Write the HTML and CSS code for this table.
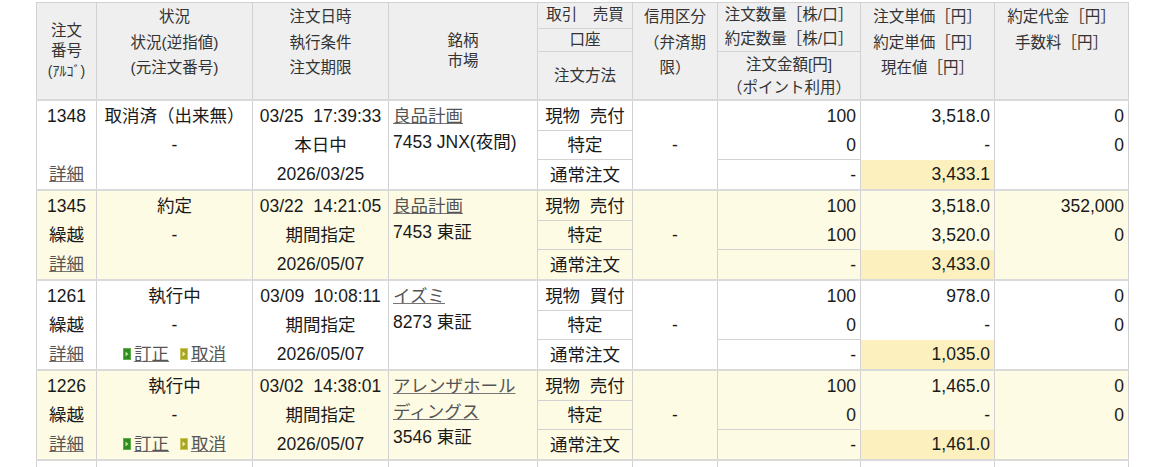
FILE: index.html
```html
<!DOCTYPE html>
<html lang="ja">
<head>
<meta charset="utf-8">
<title>注文一覧</title>
<link rel="stylesheet" href="styles.css">
</head>
<body>
<div class="wrap">
<table class="orders">
  <colgroup>
    <col class="w1"><col class="w2"><col class="w3"><col class="w4"><col class="w5">
    <col class="w6"><col class="w7"><col class="w8"><col class="w9">
  </colgroup>
  <thead>
    <tr class="h1">
      <th rowspan="3" class="hc hmid">注文<br>番号<br><span class="algo">(ｱﾙｺﾞ)</span></th>
      <th rowspan="3" class="htop">状況<br>状況(逆指値)<br>(元注文番号)</th>
      <th rowspan="3" class="htop">注文日時<br>執行条件<br>注文期限</th>
      <th rowspan="3" class="hc hmid">銘柄<br>市場</th>
      <th class="hsub">取引　売買</th>
      <th rowspan="3" class="htop">信用区分<br>（弁済期<br>限）</th>
      <th rowspan="2" class="hqty">注文数量［株/口］<br>約定数量［株/口］</th>
      <th rowspan="3" class="htop">注文単価［円］<br>約定単価［円］<br>現在値［円］</th>
      <th rowspan="3" class="htop">約定代金［円］<br>手数料［円］</th>
    </tr>
    <tr class="h2">
      <th class="hsub">口座</th>
    </tr>
    <tr class="h3">
      <th class="hsub">注文方法</th>
      <th class="hamt">注文金額[円]<br>（ポイント利用）</th>
    </tr>
  </thead>
  <tbody>
    <!-- 1348 -->
    <tr class="s1">
      <td class="c">1348</td>
      <td class="c">取消済（出来無）</td>
      <td class="c">03/25&nbsp;&nbsp;17:39:33</td>
      <td rowspan="3" class="name"><a href="#">良品計画</a><br>7453 JNX(夜間)</td>
      <td class="k">現物&nbsp;&nbsp;売付</td>
      <td rowspan="3" class="c">-</td>
      <td class="r">100</td>
      <td class="r">3,518.0</td>
      <td class="r">0</td>
    </tr>
    <tr class="s2">
      <td class="c"></td>
      <td class="c">-</td>
      <td class="c">本日中</td>
      <td class="k">特定</td>
      <td class="r">0</td>
      <td class="r">-</td>
      <td class="r">0</td>
    </tr>
    <tr class="s3">
      <td class="c"><a href="#">詳細</a></td>
      <td class="c"></td>
      <td class="c">2026/03/25</td>
      <td class="k">通常注文</td>
      <td class="r amt">-</td>
      <td class="r hl">3,433.1</td>
      <td class="r"></td>
    </tr>

    <!-- 1345 -->
    <tr class="s1 y">
      <td class="c">1345</td>
      <td class="c">約定</td>
      <td class="c">03/22&nbsp;&nbsp;14:21:05</td>
      <td rowspan="3" class="name"><a href="#">良品計画</a><br>7453 東証</td>
      <td class="k">現物&nbsp;&nbsp;売付</td>
      <td rowspan="3" class="c">-</td>
      <td class="r">100</td>
      <td class="r">3,518.0</td>
      <td class="r">352,000</td>
    </tr>
    <tr class="s2 y">
      <td class="c">繰越</td>
      <td class="c">-</td>
      <td class="c">期間指定</td>
      <td class="k">特定</td>
      <td class="r">100</td>
      <td class="r">3,520.0</td>
      <td class="r">0</td>
    </tr>
    <tr class="s3 y">
      <td class="c"><a href="#">詳細</a></td>
      <td class="c"></td>
      <td class="c">2026/05/07</td>
      <td class="k">通常注文</td>
      <td class="r amt">-</td>
      <td class="r hl">3,433.0</td>
      <td class="r"></td>
    </tr>

    <!-- 1261 -->
    <tr class="s1">
      <td class="c">1261</td>
      <td class="c">執行中</td>
      <td class="c">03/09&nbsp;&nbsp;10:08:11</td>
      <td rowspan="3" class="name"><a href="#">イズミ</a><br>8273 東証</td>
      <td class="k">現物&nbsp;&nbsp;買付</td>
      <td rowspan="3" class="c">-</td>
      <td class="r">100</td>
      <td class="r">978.0</td>
      <td class="r">0</td>
    </tr>
    <tr class="s2">
      <td class="c">繰越</td>
      <td class="c">-</td>
      <td class="c">期間指定</td>
      <td class="k">特定</td>
      <td class="r">0</td>
      <td class="r">-</td>
      <td class="r">0</td>
    </tr>
    <tr class="s3">
      <td class="c"><a href="#">詳細</a></td>
      <td class="c acts">
        <span class="act"><svg class="ico" width="8" height="12" viewBox="0 0 8 12"><rect x="0.5" y="0.5" width="7" height="11" fill="#2f8a22" stroke="#5fae4a"/><path d="M2.5 3.5 L5.5 6 L2.5 8.5 Z" fill="#bfe39a"/></svg><a href="#">訂正</a></span>
        <span class="act"><svg class="ico" width="8" height="12" viewBox="0 0 8 12"><rect x="0.5" y="0.5" width="7" height="11" fill="#a6a524" stroke="#c9c65a"/><path d="M2.5 3.5 L5.5 6 L2.5 8.5 Z" fill="#f3f0b0"/></svg><a href="#">取消</a></span>
      </td>
      <td class="c">2026/05/07</td>
      <td class="k">通常注文</td>
      <td class="r amt">-</td>
      <td class="r hl">1,035.0</td>
      <td class="r"></td>
    </tr>

    <!-- 1226 -->
    <tr class="s1 y">
      <td class="c">1226</td>
      <td class="c">執行中</td>
      <td class="c">03/02&nbsp;&nbsp;14:38:01</td>
      <td rowspan="3" class="name"><a href="#">アレンザホール<br>ディングス</a><br>3546 東証</td>
      <td class="k">現物&nbsp;&nbsp;売付</td>
      <td rowspan="3" class="c">-</td>
      <td class="r">100</td>
      <td class="r">1,465.0</td>
      <td class="r">0</td>
    </tr>
    <tr class="s2 y">
      <td class="c">繰越</td>
      <td class="c">-</td>
      <td class="c">期間指定</td>
      <td class="k">特定</td>
      <td class="r">0</td>
      <td class="r">-</td>
      <td class="r">0</td>
    </tr>
    <tr class="s3 y">
      <td class="c"><a href="#">詳細</a></td>
      <td class="c acts">
        <span class="act"><svg class="ico" width="8" height="12" viewBox="0 0 8 12"><rect x="0.5" y="0.5" width="7" height="11" fill="#2f8a22" stroke="#5fae4a"/><path d="M2.5 3.5 L5.5 6 L2.5 8.5 Z" fill="#bfe39a"/></svg><a href="#">訂正</a></span>
        <span class="act"><svg class="ico" width="8" height="12" viewBox="0 0 8 12"><rect x="0.5" y="0.5" width="7" height="11" fill="#a6a524" stroke="#c9c65a"/><path d="M2.5 3.5 L5.5 6 L2.5 8.5 Z" fill="#f3f0b0"/></svg><a href="#">取消</a></span>
      </td>
      <td class="c">2026/05/07</td>
      <td class="k">通常注文</td>
      <td class="r amt">-</td>
      <td class="r hl">1,461.0</td>
      <td class="r"></td>
    </tr>

    <!-- next (cut off) -->
    <tr class="s1">
      <td class="c"></td><td class="c"></td><td class="c"></td>
      <td rowspan="3" class="name"></td>
      <td class="k"></td>
      <td rowspan="3" class="c"></td>
      <td class="r"></td><td class="r"></td><td class="r"></td>
    </tr>
    <tr class="s2">
      <td class="c"></td><td class="c"></td><td class="c"></td>
      <td class="k"></td><td class="r"></td><td class="r"></td><td class="r"></td>
    </tr>
  </tbody>
</table>
</div>
</body>
</html>
```

FILE: styles.css
```css
html, body {
  margin: 0;
  padding: 0;
  background: #ffffff;
}

body {
  font-family: "Liberation Sans", "Noto Sans CJK JP", sans-serif;
  color: #1a1a1a;
}

.wrap {
  padding: 2px 0 0 36px;
}

.orders {
  border-collapse: collapse;
  table-layout: fixed;
  width: 1093px;
  border: 1px solid #d2d2d2;
}

.w1 { width: 60px; }
.w2 { width: 156px; }
.w3 { width: 136px; }
.w4 { width: 149px; }
.w5 { width: 95px; }
.w6 { width: 85px; }
.w7 { width: 143px; }
.w8 { width: 134px; }
.w9 { width: 134px; }

/* header */
.orders th {
  background: #efefef;
  color: #333333;
  font-weight: normal;
  font-size: 15.5px;
  text-align: center;
  border: 1px solid #d2d2d2;
  padding: 0 2px;
  white-space: nowrap;
}

.orders thead tr.h1 { height: 25px; }
.orders thead tr.h2 { height: 23px; }
.orders thead tr.h3 { height: 46px; }

.orders th.htop {
  vertical-align: top;
  line-height: 25.5px;
  padding-top: 1px;
}

.orders th.hmid {
  vertical-align: middle;
  line-height: 20px;
}

.orders th.hsub {
  vertical-align: middle;
  line-height: 20px;
}

.orders th.hqty {
  vertical-align: middle;
  line-height: 24px;
}

.orders th.hamt {
  vertical-align: top;
  line-height: 23px;
  padding-top: 1px;
}

.algo {
  font-size: 14px;
}

.orders thead tr:last-child th,
.orders thead th[rowspan="3"] {
  border-bottom: 2px solid #d9d9d9;
}

/* body */
.orders td {
  font-size: 17.5px;
  line-height: 22px;
  height: 29px;
  padding: 0 4px;
  border-left: 1px solid #d2d2d2;
  border-right: 1px solid #d2d2d2;
  vertical-align: middle;
  white-space: nowrap;
  background: #ffffff;
}

.orders tr.s2 td {
  height: 28px;
}

.orders tr.y td {
  background: #fefbe4;
}

.orders tr.s1 td {
  border-top: 2px solid #dadada;
}

.orders td.c { text-align: center; }
.orders td.r { text-align: right; }

.orders td.k {
  text-align: center;
  border-top: 1px solid #d2d2d2;
  border-bottom: 1px solid #d2d2d2;
}

.orders td.amt {
  border-top: 1px solid #d2d2d2;
}

.orders td.name {
  vertical-align: top;
  text-align: left;
  line-height: 25.5px;
  padding-top: 3px;
  white-space: normal;
}

.orders td.hl,
.orders tr.y td.hl {
  background: #fcf0be;
}

.orders a {
  color: #555555;
  text-decoration: underline;
  text-decoration-color: #777777;
}

.acts {
  font-size: 17.5px;
}

.act {
  display: inline-flex;
  align-items: center;
  gap: 3px;
}

.act + .act {
  margin-left: 6px;
}

.ico {
  display: block;
  flex: none;
}
```
